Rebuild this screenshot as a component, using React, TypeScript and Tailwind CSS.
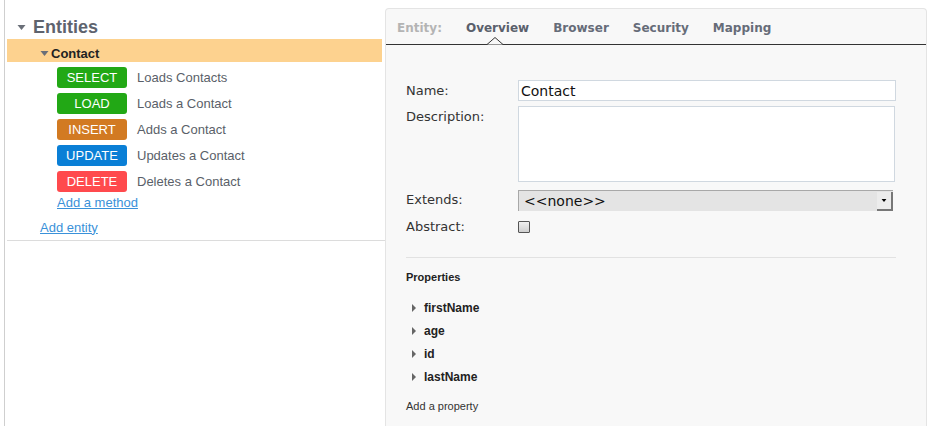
import { useState } from "react";

const methods = [
  { verb: "SELECT", text: "Loads Contacts", color: "bg-[#22a815]" },
  { verb: "LOAD", text: "Loads a Contact", color: "bg-[#22a815]" },
  { verb: "INSERT", text: "Adds a Contact", color: "bg-[#d27a22]" },
  { verb: "UPDATE", text: "Updates a Contact", color: "bg-[#0a7fd6]" },
  { verb: "DELETE", text: "Deletes a Contact", color: "bg-[#ff4a4d]" },
];

const properties = ["firstName", "age", "id", "lastName"];

const tabs = ["Overview", "Browser", "Security", "Mapping"];

function DownTri({ className }: { className: string }) {
  return (
    <svg viewBox="0 0 8 5" className={className}>
      <path d="M0 0h8L4 5z" fill="currentColor" />
    </svg>
  );
}

export default function App() {
  const [abstract, setAbstract] = useState(false);

  return (
    <div className="flex h-[426px] w-[932px] overflow-hidden bg-white font-['Liberation_Sans',Arial,sans-serif]">
      {/* Entities tree */}
      <div className="ml-[4px] w-[381px] border-l border-[#cfcfcf] pl-[2px]">
        <div className="h-[241px] border-b border-[#dcdcdc]">
          <div className="flex h-[39px] items-center pl-[10px] pt-[16px]">
            <DownTri className="h-[5px] w-[9px] text-[#6a6f78]" />
            <span className="ml-[7px] text-[18px] font-bold text-[#5e636e]">Entities</span>
          </div>
          <div className="flex h-[23px] w-[375px] items-center bg-[#fdd28f] pl-[33px] pt-[6px]">
            <DownTri className="h-[5px] w-[9px] text-[#6a6f78]" />
            <span className="ml-[2px] text-[13px] font-bold text-[#222]">Contact</span>
          </div>
          <div className="mt-[5px] flex flex-col gap-[5px] pl-[50px]">
            {methods.map((m) => (
              <div key={m.verb} className="flex items-center">
                <span
                  className={`flex h-[21px] w-[70px] items-center justify-center rounded-[3px] text-[13px] text-white ${m.color}`}
                >
                  {m.verb}
                </span>
                <span className="ml-[10px] text-[13px] text-[#5a5f69]">{m.text}</span>
              </div>
            ))}
          </div>
          <a href="#" className="mt-[1px] ml-[50px] block text-[13px] text-[#3a91d9] underline">
            Add a method
          </a>
          <a href="#" className="mt-[5px] ml-[33px] block text-[13px] text-[#3a91d9] underline">
            Add entity
          </a>
        </div>
      </div>

      {/* Entity editor */}
      <div className="mt-[8px] w-[542px] rounded-t-[4px] border border-b-0 border-[#e4e4e4] bg-[#f8f8f8] font-['DejaVu_Sans',Verdana,sans-serif]">
        <div className="relative flex h-[36px] items-center gap-[24px] border-b border-[#333] pl-[11px] pt-[3px] text-[12px] font-bold">
          <span className="text-[#b4b4b4]">Entity:</span>
          {tabs.map((t, i) => (
            <span key={t} className={i === 0 ? "text-[#5a606c]" : "text-[#666c78]"}>
              {t}
            </span>
          ))}
          <svg viewBox="0 0 16 8" className="absolute bottom-[-1px] left-[101px] h-[8px] w-[16px]">
            <path d="M0 7.5L8 0.5L16 7.5" fill="#f8f8f8" stroke="#333" strokeWidth="1" />
          </svg>
        </div>

        <div className="px-[20px] pt-[35px] text-[13px] leading-[18px] text-[#333]">
          <div className="flex items-start">
            <label className="w-[112px] pt-[2px]">Name:</label>
            <input
              defaultValue="Contact"
              className="h-[21px] w-[378px] border border-[#d0d8e0] bg-white px-[2px] text-[14px] text-[#111] outline-none"
            />
          </div>
          <div className="mt-[5px] flex items-start">
            <label className="w-[112px] pt-[2px]">Description:</label>
            <textarea className="h-[76px] w-[377px] resize-none border border-[#d0d8e0] bg-white outline-none" />
          </div>
          <div className="mt-[8px] flex items-start">
            <label className="w-[112px] pt-[1px]">Extends:</label>
            <div className="flex h-[21px] w-[375px] items-center justify-between border-t border-l border-[#a8a8a8] bg-[#e4e4e4]">
              <span className="pl-[5px] text-[14px] text-[#111]">&lt;&lt;none&gt;&gt;</span>
              <span className="flex h-[19px] w-[16px] items-center justify-center border-r-2 border-b-2 border-[#777] bg-[#ececec]">
                <DownTri className="h-[3px] w-[6px] text-black" />
              </span>
            </div>
          </div>
          <div className="mt-[7px] flex items-start">
            <label className="w-[112px]">Abstract:</label>
            <div className="pt-[3px]">
              <input
                type="checkbox"
                checked={abstract}
                onChange={(e) => setAbstract(e.target.checked)}
                className="block h-[12px] w-[12px] appearance-none rounded-[1px] border border-[#555] bg-gradient-to-b from-[#f0f0f0] to-[#cfcfcf]"
              />
            </div>
          </div>

          <div className="mt-[21px] w-[490px] border-t border-[#e2e2e2]" />

          <div className="font-['Liberation_Sans',Arial,sans-serif] text-[11px] leading-normal text-[#222]">
            <div className="mt-[11px] font-bold">Properties</div>
            <div className="mt-[15px] flex flex-col gap-[9px] pl-[6px]">
              {properties.map((p) => (
                <div key={p} className="flex h-[14px] items-center font-bold">
                  <svg viewBox="0 0 4 8" className="h-[8px] w-[4px] text-[#666]">
                    <path d="M0 0L4 4L0 8z" fill="currentColor" />
                  </svg>
                  <span className="ml-[8px] text-[12px]">{p}</span>
                </div>
              ))}
            </div>
            <div className="mt-[14px] text-[11px] text-[#333]">Add a property</div>
          </div>
        </div>
      </div>
    </div>
  );
}
